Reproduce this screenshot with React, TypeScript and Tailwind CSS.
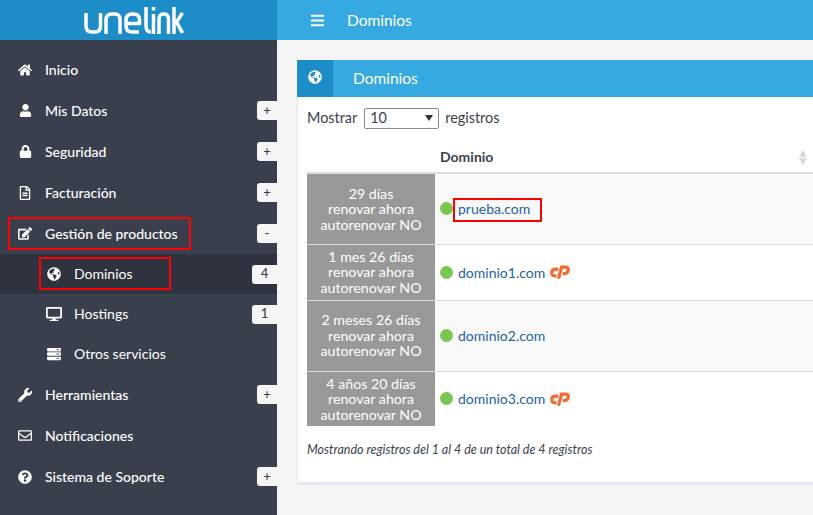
import { FaHome, FaUser, FaLock, FaRegFileAlt, FaEdit, FaGlobeAmericas, FaDesktop, FaServer, FaWrench, FaRegEnvelope, FaQuestionCircle, FaBars } from 'react-icons/fa'
import type { ReactNode } from 'react'

function Logo() {
  return (
    <svg width="100" height="27" viewBox="0 0 100 27" fill="none" stroke="#fff" strokeWidth="3.5" aria-label="unelink">
      <path d="M2 6v13q0 6 6 6h3q5.5 0 5.5-6V6" />
      <path d="M22 27V13q0-6 6-6h3q5 0 5 6v14" />
      <path d="M42 16.5h13.5V13q0-6-6-6h-1q-6.5 0-6.5 6v6q0 6 6 6h7" />
      <path d="M62 0v19q0 6 5 6" />
      <path d="M69.5 7v20M69.5 0v3.5" />
      <path d="M75 27V13q0-6 4-6h1.5q4 0 4 6v14" />
      <path d="M90 0v27" />
      <path d="M98.5 6l-6 9 6 11" />
    </svg>
  )
}

function CpanelIcon() {
  return (
    <svg width="20" height="14" viewBox="0 0 20 14" fill="none" stroke="#f26a2e" strokeWidth="3.2" className="shrink-0" aria-label="cPanel">
      <path d="M8.5 4.2H5.5Q2 4.2 1.8 7.5T4.8 10.8H6.5" />
      <path d="M8.5 13.6L11.6 2.2H15.5Q18.6 2.2 18.3 5T15 8.6H12.8" />
    </svg>
  )
}

function RedBox({ className }: { className: string }) {
  return <div className={`absolute border-2 border-[#f00] pointer-events-none ${className}`} />
}

function Badge({ children, wide = false }: { children: ReactNode; wide?: boolean }) {
  return (
    <span className={`ml-auto flex h-[19px] items-center justify-center rounded-l-[3px] bg-[#f5f5f5] text-[13px] font-medium text-[#3a3f4d] ${wide ? 'w-[25px]' : 'w-[20px]'}`}>
      {children}
    </span>
  )
}

function NavItem({ icon, label, badge }: { icon: ReactNode; label: string; badge?: string }) {
  return (
    <a className="flex h-[41px] items-center text-[14px] font-medium text-white">
      <span className="ml-[18px] mr-[13px] flex w-[14px] justify-center text-[14px]">{icon}</span>
      <span>{label}</span>
      {badge && <Badge>{badge}</Badge>}
    </a>
  )
}

function SubItem({ icon, label, badge, active = false }: { icon: ReactNode; label: string; badge?: string; active?: boolean }) {
  return (
    <a className={`flex h-[40px] items-center text-[14px] text-white ${active ? 'bg-[#2f333f]' : ''}`}>
      <span className="ml-[46px] mr-[12px] flex w-[16px] justify-center">{icon}</span>
      <span className="pb-[1px]">{label}</span>
      {badge && <Badge wide>{badge}</Badge>}
    </a>
  )
}

const rows = [
  { left: '29 días', name: 'prueba.com', cp: false, h: 'h-[71px]', bg: 'bg-[#f9f9f9]' },
  { left: '1 mes 26 días', name: 'dominio1.com', cp: true, h: 'h-[56px]', bg: 'bg-white' },
  { left: '2 meses 26 días', name: 'dominio2.com', cp: false, h: 'h-[71px]', bg: 'bg-[#f9f9f9]' },
  { left: '4 años 20 días', name: 'dominio3.com', cp: true, h: 'h-[55px]', bg: 'bg-white' },
]

export default function App() {
  return (
    <div className="relative flex h-[515px] w-[813px] overflow-hidden bg-[#f5f5f5] font-['Lato','Liberation_Sans',sans-serif] text-[14px] text-[#3a3f4d]">
      <aside className="flex w-[277px] shrink-0 flex-col bg-[#3a3f4d]">
        <div className="flex h-[40px] shrink-0 items-center bg-[#1d8dc7] pl-[84px]">
          <Logo />
        </div>
        <nav className="pt-[9px]">
          <NavItem icon={<FaHome />} label="Inicio" />
          <NavItem icon={<FaUser className="text-[13px]" />} label="Mis Datos" badge="+" />
          <NavItem icon={<FaLock className="text-[13px]" />} label="Seguridad" badge="+" />
          <NavItem icon={<FaRegFileAlt className="text-[14px]" />} label="Facturación" badge="+" />
          <NavItem icon={<FaEdit className="text-[15px]" />} label="Gestión de productos" badge="-" />
          <SubItem icon={<FaGlobeAmericas className="text-[14px]" />} label="Dominios" badge="4" active />
          <SubItem icon={<FaDesktop className="text-[16px]" />} label="Hostings" badge="1" />
          <SubItem icon={<FaServer className="text-[14px]" />} label="Otros servicios" />
          <NavItem icon={<FaWrench />} label="Herramientas" badge="+" />
          <NavItem icon={<FaRegEnvelope className="text-[15px]" />} label="Notificaciones" />
          <NavItem icon={<FaQuestionCircle />} label="Sistema de Soporte" badge="+" />
        </nav>
      </aside>

      <main className="flex min-w-0 flex-1 flex-col">
        <header className="flex h-[40px] shrink-0 items-center bg-[#36a9e1] pl-[33px] text-white">
          <FaBars className="text-[15px]" />
          <span className="ml-[22px] pt-[1px] text-[15.5px]">Dominios</span>
        </header>

        <section className="ml-[20px] mt-[20px] h-[425px] rounded-tl-[3px] border-b-[3px] border-[#e6e9ef] bg-white shadow-[inset_1px_0_0_#e6e9ef]">
          <div className="flex h-[37px] items-center bg-[#36a9e1] text-white">
            <span className="flex h-full w-[36px] items-center justify-center bg-[#1d8dc7] pb-[4px] text-[14px]">
              <FaGlobeAmericas />
            </span>
            <span className="ml-[20px] text-[15.5px]">Dominios</span>
          </div>

          <div className="pl-[10px]">
            <div className="mt-[11px] flex h-[20px] items-center text-[14.4px]">
              <span>Mostrar</span>
              <span className="relative ml-[7px] flex h-[21px] w-[75px] items-center rounded-[2px] border border-[#8a8a8a] bg-white pl-[5px]">
                10
                <span className="absolute right-[5px] top-[6px] h-0 w-0 border-x-[4px] border-t-[6px] border-x-transparent border-t-[#333]" />
              </span>
              <span className="ml-[6px]">registros</span>
            </div>

            <table className="mt-[12px] w-full border-collapse">
              <thead>
                <tr className="h-[33px] border-b-[2px] border-[#ddd]">
                  <th className="w-[128px] p-0" />
                  <th className="relative p-0 pl-[5px] text-left text-[14px] font-bold">
                    Dominio
                    <span className="absolute right-[6px] top-[10px] flex flex-col gap-[1px]">
                      <span className="h-0 w-0 border-x-[4px] border-b-[7px] border-x-transparent border-b-[#d8d8d8]" />
                      <span className="h-0 w-0 border-x-[4px] border-t-[7px] border-x-transparent border-t-[#d8d8d8]" />
                    </span>
                  </th>
                </tr>
              </thead>
              <tbody>
                {rows.map((r) => (
                  <tr key={r.name} className={`${r.h} ${r.bg} border-b border-[#ddd] last:border-b-0`}>
                    <td className="bg-[#999] p-0 text-center text-[14.2px] leading-[15.5px] text-white">
                      {r.left}
                      <br />
                      renovar ahora
                      <br />
                      autorenovar NO
                    </td>
                    <td className="p-0 pl-[5px]">
                      <div className="flex items-center">
                        <span className="h-[13px] w-[13px] rounded-full bg-[#7ac74f]" />
                        <a className="ml-[5px] text-[#23639f]">{r.name}</a>
                        {r.cp && <span className="ml-[5px] flex"><CpanelIcon /></span>}
                      </div>
                    </td>
                  </tr>
                ))}
              </tbody>
            </table>

            <p className="mt-[15px] text-[12.5px] italic">Mostrando registros del 1 al 4 de un total de 4 registros</p>
          </div>
        </section>
      </main>

      <RedBox className="left-[8px] top-[217px] h-[33px] w-[183px]" />
      <RedBox className="left-[39px] top-[257px] h-[33px] w-[132px]" />
      <RedBox className="left-[453px] top-[198px] h-[24px] w-[89px]" />
    </div>
  )
}
